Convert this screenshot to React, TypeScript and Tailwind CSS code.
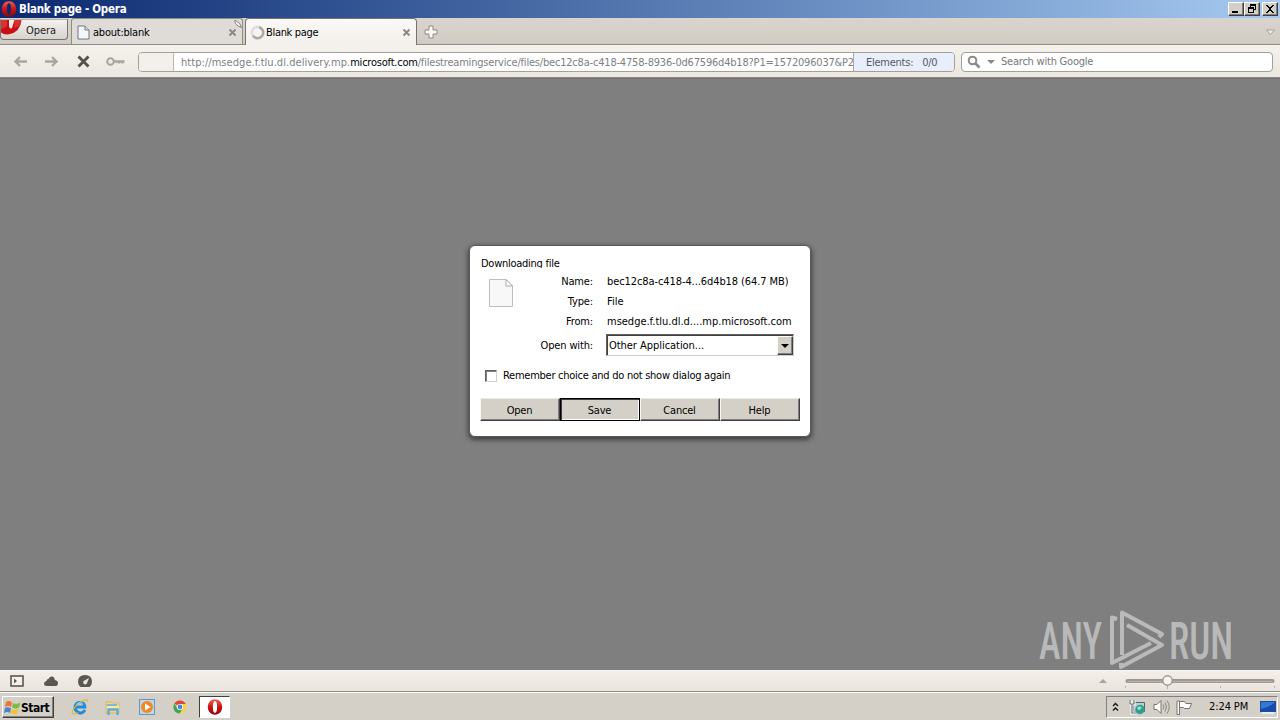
import type { ReactNode } from 'react';

const RAISED =
  'border border-t-white border-l-white border-r-[#404040] border-b-[#404040] shadow-[inset_-1px_-1px_0_#808080]';

function WinButton({ children, className = '' }: { children: ReactNode; className?: string }) {
  return (
    <button className={`flex h-[14px] w-4 items-center justify-center bg-[#d4d0c8] ${RAISED} ${className}`}>
      <svg width="12" height="12" viewBox="0 0 12 12" shapeRendering="crispEdges" className="shrink-0">{children}</svg>
    </button>
  );
}

function OperaO({ size }: { size: number }) {
  return (
    <svg width={size} height={size} viewBox="0 0 16 16" className="shrink-0">
      <defs>
        <linearGradient id="opera" x1="0" y1="0" x2="0" y2="1">
          <stop offset="0" stopColor="#f0604f" />
          <stop offset="0.5" stopColor="#cc1414" />
          <stop offset="1" stopColor="#8c0808" />
        </linearGradient>
      </defs>
      <path fillRule="evenodd" fill="url(#opera)" d="M8 .3C3.700.3.8 3.800.8 8s2.900 7.700 7.200 7.700 7.200-3.500 7.200-7.700S12.300.3 8 .3ZM8 2.200c1.600 0 2.100 2.700 2.100 5.800S9.600 13.800 8 13.800s-2.100-2.700-2.100-5.800S6.400 2.200 8 2.200Z" />
    </svg>
  );
}

function TabClose() {
  return (
    <svg width="9" height="9" viewBox="0 0 9 9" className="mt-[1px] shrink-0">
      <path d="M1.500 1.500l6 6M7.500 1.500l-6 6" stroke="#8b8782" strokeWidth="1.900" />
    </svg>
  );
}

function TitleBar() {
  return (
    <header className="flex h-[18px] items-center bg-linear-to-r from-[#0d2870] to-[#a6caf0] pr-[2px] pl-[1px]">
      <OperaO size={16} />
      <span className="mt-[2px] ml-[2px] text-[11.5px] font-bold tracking-[-0.25px] text-white">Blank page - Opera</span>
      <div className="ml-auto flex">
        <WinButton><path d="M2 8h6v2H2z" /></WinButton>
        <WinButton>
          <path d="M4 1h6v6H8V6h1V3H5v1H4zM2 4h6v6H2zM3 6v3h4V6z" fillRule="evenodd" />
        </WinButton>
        <WinButton className="ml-[2px]"><path d="M2 2h2v1h1v1h2V3h1V2h2v1H9v1H8v1H7v2h1v1h1v1h1v1H8V9H7V8H5v1H4v1H2V9h1V8h1V7h1V5H4V4H3V3H2z" /></WinButton>
      </div>
    </header>
  );
}

function TabBar() {
  return (
    <div className="flex h-[27px] border-b border-[#8f8a83] bg-linear-to-b from-[#d9d5ce] to-[#d1cbc3]">
      <button className="mt-[1px] flex h-[21px] w-[68px] shrink-0 overflow-hidden rounded-b-[4px] border border-t-[#b5b0aa] border-[#77736f] bg-linear-to-b from-[#f3f1ee] to-[#d7d3ce]">
        <svg width="21" height="17" viewBox="0 0 21 17" className="shrink-0">
          <path d="M0 0H8V6.500Q9 9.500 11 8L13.500 0H20.500Q19.500 12 8 14.300Q3 15 0 12.500Z" fill="#c80f14" />
          <path d="M0 0H6V6Q3 9 0 9ZM14 0H20L18 6L13 8Z" fill="#e34b43" opacity=".6" />
        </svg>
        <span className="mt-[4px] ml-[4px] text-[11px] leading-[14px] tracking-[-0.05px] text-[#222]">Opera</span>
      </button>
      <div className="relative ml-[3px] flex h-[26px] w-[172px] shrink-0 items-center rounded-t-[3px] border border-b-0 border-[#8f8b87] bg-[#dfdbd7] pt-[1px] pr-[5px] pl-[5px]">
        <svg width="13" height="15" viewBox="0 0 13 15" className="shrink-0">
          <path d="M1 1H8L12 5V14H1Z" fill="#f4f7fc" stroke="#6e7787" />
          <path d="M8 1V5H12" fill="#d9dfea" stroke="#6e7787" />
        </svg>
        <span className="mt-[2px] ml-[3px] flex-1 text-[11px] tracking-[-0.23px] whitespace-nowrap text-black">about:blank</span>
        <TabClose />
        <svg width="9" height="9" viewBox="0 0 9 9" className="absolute top-[1px] right-[-1px]">
          <path d="M1 0Q0 5 7.500 7.500Q7 3 1 0Z" fill="#f6f3ed" stroke="#77746f" strokeWidth=".9" />
        </svg>
      </div>
      <div className="z-10 ml-[2px] flex h-[27px] w-[172px] shrink-0 items-center rounded-t-[4px] border border-b-0 border-[#77736e] bg-linear-to-b from-[#faf9f6] to-[#f3f0ea] pr-[5px] pb-px pt-[1px] pl-[4px]">
        <svg width="15" height="15" viewBox="0 0 15 15" className="shrink-0">
          <circle cx="7.500" cy="7.500" r="5.600" fill="none" stroke="#dedddd" strokeWidth="2.500" />
          <path d="M9 2.200A5.600 5.600 0 1 1 3 10.800" fill="none" stroke="#aaa9ae" strokeWidth="2.500" />
        </svg>
        <span className="mt-[2px] ml-[1px] flex-1 text-[11px] tracking-[-0.32px] whitespace-nowrap text-black">Blank page</span>
        <TabClose />
      </div>
      <svg width="14" height="14" viewBox="0 0 14 14" className="mt-[7px] ml-[7px]">
        <path d="M5 1H9V5H13V9H9V13H5V9H1V5H5Z" fill="#f9f8f4" stroke="#8e8b84" />
      </svg>
      <svg width="11" height="7" viewBox="0 0 11 7" className="mt-[11px] mr-[4px] ml-auto">
        <path d="M1.500 1H9.500L5.500 5.500Z" fill="#efede8" stroke="#a5a19a" />
      </svg>
    </div>
  );
}

function Toolbar() {
  return (
    <div className="flex h-[33px] items-center border-b border-[#8a8681] bg-linear-to-b from-[#f5f2ed] to-[#ece7e0] pt-[1px] pr-[7px] pl-[13px]">
      <svg width="15" height="13" viewBox="0 0 15 13"><path d="M14 6.500H3M7 2L2.500 6.500L7 11" fill="none" stroke="#aaa69f" strokeWidth="2.400" /></svg>
      <svg width="15" height="13" viewBox="0 0 15 13" className="ml-[16px]"><path d="M1 6.500H12M8 2L12.500 6.500L8 11" fill="none" stroke="#aaa69f" strokeWidth="2.400" /></svg>
      <svg width="13" height="13" viewBox="0 0 13 13" className="ml-[18px]"><path d="M1.500 1.500L11.500 11.500M11.500 1.500L1.500 11.500" stroke="#55524d" strokeWidth="2.900" /></svg>
      <svg width="19" height="11" viewBox="0 0 19 11" className="ml-[16px]">
        <circle cx="4.500" cy="5.500" r="3.300" fill="none" stroke="#aaa69f" strokeWidth="2" />
        <path d="M8 5.500H18.500M13 5V7.500M16.500 5V7.500" stroke="#aaa69f" strokeWidth="2.400" />
      </svg>
      <div className="ml-[13px] flex h-[20px] w-[817px] shrink-0 overflow-hidden rounded-[4px] border border-[#a39f99] bg-white text-[11px] leading-[18px] text-[#808080]">
        <div className="w-[35px] shrink-0 border-r border-[#b9b5af] bg-[#f3f0eb]" />
        <div className="flex-1 overflow-hidden pt-px pl-[7px] tracking-[-0.196px] whitespace-nowrap">
          <span className="tracking-[0.05px]">http://msedge.f.tlu.dl.delivery.mp.</span>
          <span className="tracking-[-0.22px] text-black">microsoft.com</span>/filestreamingservice/files/bec12c8a-c418-4758-8936-0d67596d4b18?P1=1572096037&amp;P2
        </div>
        <div className="w-[101px] shrink-0 border-l border-[#a5a8b0] bg-[#e8effb] pt-px pl-[12px] tracking-[-0.25px] text-[#555b66]">
          Elements:<span className="ml-[9px]">0/0</span>
        </div>
      </div>
      <div className="ml-[6px] flex h-[20px] flex-1 items-center rounded-[4px] border border-[#a39f99] bg-white">
        <svg width="14" height="14" viewBox="0 0 14 14" className="ml-[5px]">
          <circle cx="5.500" cy="5.500" r="3.800" fill="none" stroke="#8c8a87" strokeWidth="2" />
          <path d="M8.500 8.500L12.500 12.500" stroke="#8c8a87" strokeWidth="2.600" />
        </svg>
        <svg width="8" height="4" viewBox="0 0 8 4" className="ml-[6px]"><path d="M0 0H8L4 4Z" fill="#8c8a87" /></svg>
        <span className="mt-px ml-[6px] text-[11px] tracking-[-0.22px] text-[#777]">Search with Google</span>
      </div>
    </div>
  );
}

function Row({ label, value, spacing }: { label: string; value: string; spacing: string }) {
  return (
    <div className="flex h-[20px] items-center">
      <span className="w-[73px] text-right tracking-[-0.15px]">{label}</span>
      <span className={`ml-[14px] whitespace-nowrap ${spacing}`}>{value}</span>
    </div>
  );
}

function DialogButton({ label, focused = false }: { label: string; focused?: boolean }) {
  const edge = focused
    ? 'border border-black shadow-[inset_1px_1px_0_#404040,inset_-1px_-1px_0_#fff]'
    : 'border border-t-[#eceae6] border-l-[#f8f7f5] border-r-[#404040] border-b-[#404040] shadow-[inset_-1px_-1px_0_#808080]';
  return (
    <button className={`flex h-[23px] w-[80px] items-center justify-center bg-[#d4d0c8] pt-px pr-px tracking-[-0.2px] ${edge}`}>{label}</button>
  );
}

function Dialog() {
  return (
    <section className="mt-[166px] h-[192px] w-[342px] rounded-[6px] border border-[#5a5a5a] bg-white pt-[11px] pl-[10px] text-[11px] leading-[13px] text-black shadow-[0_2px_5px_1px_rgba(0,0,0,0.5)]">
      <h1 className="h-[11px] overflow-hidden pl-[1px] tracking-[-0.26px]">Downloading file</h1>
      <div className="mt-[3px] flex h-[60px]">
        <svg width="24" height="28" viewBox="0 0 24 28" className="mt-[8px] ml-[9px]">
          <path d="M.5.5H17L23.500 7V27.500H.5Z" fill="#f8f8f8" stroke="#bdbdbd" />
          <path d="M17 .5V7H23.500Z" fill="#fff" stroke="#aaa" />
        </svg>
        <div className="ml-[7px]">
          <Row label="Name:" value="bec12c8a-c418-4...6d4b18 (64.7 MB)" spacing="tracking-[-0.09px]" />
          <Row label="Type:" value="File" spacing="tracking-[0.05px]" />
          <Row label="From:" value="msedge.f.tlu.dl.d....mp.microsoft.com" spacing="tracking-[-0.01px]" />
        </div>
      </div>
      <div className="mt-[3px] flex items-center">
        <span className="mt-px w-[113px] text-right tracking-[-0.15px]">Open with:</span>
        <div className="ml-[13px] flex h-[22px] w-[188px] items-center justify-between border border-t-[#606060] border-l-[#606060] border-r-[#d4d0c8] border-b-[#d4d0c8] pl-[2px] shadow-[inset_1px_1px_0_#404040]">
          <span className="mt-px tracking-[-0.04px]">Other Application...</span>
          <div className={`mt-px flex h-[19px] w-[16px] items-center justify-center bg-[#d4d0c8] pr-px ${RAISED}`}>
            <svg width="8" height="4" viewBox="0 0 8 4" className="shrink-0"><path d="M0 0H8L4 4Z" /></svg>
          </div>
        </div>
      </div>
      <div className="mt-[13px] flex items-center pl-[5px]">
        <span className="h-[12px] w-[12px] border border-t-[#606060] border-l-[#606060] border-r-[#d4d0c8] border-b-[#d4d0c8] bg-white shadow-[inset_1px_1px_0_#808080]" />
        <span className="ml-[6px] tracking-[-0.26px] whitespace-nowrap">Remember choice and do not show dialog again</span>
      </div>
      <div className="mt-[16px] flex">
        <DialogButton label="Open" />
        <DialogButton label="Save" focused />
        <DialogButton label="Cancel" />
        <DialogButton label="Help" />
      </div>
    </section>
  );
}

function Watermark() {
  return (
    <svg width="210" height="68" viewBox="0 0 210 68" className="absolute top-[607px] left-[1036px] z-20 overflow-visible">
      <g fill="#d5d5d5" opacity=".68" fontFamily="Roboto, sans-serif" fontSize="51" fontWeight="500">
        <text x="3" y="52" textLength="63" lengthAdjust="spacingAndGlyphs">ANY</text>
        <text x="133" y="52" textLength="64" lengthAdjust="spacingAndGlyphs">RUN</text>
      </g>
      <g fill="none" stroke="#cecece" strokeOpacity=".75" strokeWidth="4" strokeLinejoin="round">
        <path d="M81 12L76 10.500V56L115 36" />
        <path d="M86 48V5.500L126 27L123 30" />
        <path d="M91 18L126 38L85 60V56" />
      </g>
    </svg>
  );
}

function StatusBar() {
  return (
    <div className="flex h-[22px] items-center border-t border-[#f8f6f2] border-b border-b-[#908c86] bg-linear-to-b from-[#f4eeea] to-[#ebe4dd] pl-[10px]">
      <svg width="14" height="12" viewBox="0 0 14 12">
        <rect x="1" y="1" width="12" height="10" fill="#f5f2ee" stroke="#5b5854" strokeWidth="1.600" />
        <path d="M4 3.500V8.500L7 6Z" fill="#5b5854" />
      </svg>
      <svg width="14" height="11" viewBox="0 0 14 11" className="ml-[20px]">
        <path d="M3 10Q0 10 0 7.500Q0 5.500 2.500 5Q2.500 3 4.500 3Q5.500.2 8 .5Q10.500.8 10.800 4Q14 4.500 14 7.200Q14 10 11 10Z" fill="#5b5854" />
      </svg>
      <svg width="14" height="12" viewBox="0 0 14 12" className="ml-[20px]">
        <path d="M2.500 12Q0 9.500 0 7Q0 0 7 0T14 7Q14 9.500 11.500 12Z" fill="#5b5854" />
        <path d="M11 3L8.800 8.500A2 2 0 1 1 6 5.700Z" fill="#ece6df" />
      </svg>
      <svg width="184" height="16" viewBox="0 0 184 16" className="ml-auto">
        <path d="M3 10L7 6L11 10Z" fill="#aaa39b" />
        <path d="M31.500 8H176.500" stroke="#9c948d" strokeWidth="4" strokeLinecap="round" />
        <path d="M31.500 8.500H176.500" stroke="#b8b1ab" strokeWidth="1.500" />
        <path d="M29.500 13v2M71.500 13v3M124.500 13v2M178.500 13v2" stroke="#b7aea5" />
        <circle cx="71.500" cy="7.500" r="4.700" fill="#f7f4f1" stroke="#9d9690" strokeWidth="1.400" />
      </svg>
    </div>
  );
}

function Flag() {
  return (
    <svg width="17" height="17" viewBox="0 0 17 17" className="shrink-0">
      <path d="M2 3Q5 1 8 3.500L7 8Q4.500 6 1 8Z" fill="#ef7439" />
      <path d="M9 4Q12 6 16.500 3.500L15 8.500Q12 10.500 8 8.500Z" fill="#7eb94b" />
      <path d="M1 9Q4 7.500 7 9.500L6 14Q3.500 12 0 14Z" fill="#4286d0" />
      <path d="M8 10Q11 11.500 14.500 9.500L13 15Q10 16 6.500 14Z" fill="#f4c52c" />
    </svg>
  );
}

function LaunchIcons() {
  return (
    <div className="flex items-center">
      <svg width="18" height="18" viewBox="0 0 18 18" className="ml-[17px]">
        <path fill="none" stroke="#258ad5" strokeWidth="3" d="M14 12Q11.500 16 7.500 14.500Q3.500 12.500 4 8.500Q5 4.500 9 4.500Q13.500 4.500 13.800 9H5" />
        <path d="M16 4Q17.500 1 13.500 2Q8 4 4 9Q-.5 14.500 2 16Q4 16.500 7 14.500" fill="none" stroke="#e4b637" strokeWidth="1.200" />
        <path d="M5.500 6.500Q9 3.500 12 6.500" fill="none" stroke="#83cff7" strokeWidth="1.200" />
      </svg>
      <svg width="16" height="17" viewBox="0 0 16 17" className="ml-[16px]">
        <path d="M1 3H6L7 4H14V14H1Z" fill="#efd680" stroke="#cdb45e" strokeWidth=".7" />
        <path d="M2 5H12V7H2Z" fill="#80bad0" /><path d="M2 7H14V12H2Z" fill="#fae9a8" />
        <path d="M3.500 16V10.500H12.500V16" fill="none" stroke="#65a8d3" strokeWidth="2.400" />
      </svg>
      <svg width="16" height="16" viewBox="0 0 16 16" className="ml-[18px]">
        <rect x=".5" y=".5" width="15" height="15" fill="#b9d7ee" stroke="#6697c3" />
        <circle cx="8" cy="8" r="6" fill="#f08a20" /><path d="M6 4.500L11.500 8L6 11.500Z" fill="#fff" />
      </svg>
      <svg width="14" height="14" viewBox="0 0 14 14" className="ml-[18px]">
        <circle cx="7" cy="7" r="6.500" fill="#fbd33d" />
        <path d="M7 7L1.400 3.500A6.500 6.500 0 0 1 12.700 3.900L7 4Z" fill="#df463a" />
        <path d="M1.400 3.500A6.500 6.500 0 0 0 6.500 13.500L9.500 9L4.300 8.500Z" fill="#3ba55d" />
        <circle cx="7" cy="7" r="3.100" fill="#fff" /><circle cx="7" cy="7" r="2.400" fill="#4386e8" />
      </svg>
      <div className="ml-[12px] flex h-[22px] w-[31px] items-center justify-center border border-t-[#404040] border-l-[#404040] border-r-white border-b-white bg-white">
        <OperaO size={16} />
      </div>
    </div>
  );
}

function Taskbar() {
  return (
    <footer className="flex h-[28px] items-center border-t border-white bg-[#d4d0c8] pt-[1px] pr-[2px] pl-[2px]">
      <button className={`flex h-[22px] w-[52px] items-center bg-[#d4d0c8] pl-[1px] ${RAISED}`}>
        <Flag />
        <span className="mt-px text-[12px] font-bold tracking-[-0.5px] text-black">Start</span>
      </button>
      <LaunchIcons />
      <div className="ml-auto flex h-[22px] w-[172px] items-center border border-t-[#808080] border-l-[#808080] border-r-white border-b-white">
        <svg width="8" height="10" viewBox="0 0 8 10" className="ml-[5px]">
          <path d="M1 4L3.500 1.500L6 4M1 8.500L3.500 6L6 8.500" fill="none" stroke="#111" strokeWidth="1.300" />
        </svg>
        <svg width="17" height="17" viewBox="0 0 17 17" className="ml-[9px]">
          <path d="M4.500 3.500H15.500V12.500H4.500Z" fill="#b9d3d5" stroke="#52636b" />
          <path d="M1 1V5H5V1M3 5V14H8" fill="none" stroke="#fff" strokeWidth="3" />
          <path d="M1 1V5H5V1M3 5V14H8" fill="none" stroke="#68716c" strokeWidth="1.200" />
          <circle cx="11" cy="10.500" r="4.700" fill="#319d93" /><path d="M8 9Q10 6.500 13 8.500L10 11.500Z" fill="#a5e0c3" />
        </svg>
        <svg width="18" height="16" viewBox="0 0 18 16" className="ml-[7px]">
          <path d="M1 5.500H4L8 1.500V14.500L4 10.500H1Z" fill="#fff" stroke="#77736f" />
          <path d="M10 5.500Q12 8 10 10.500M12 3.500Q15 8 12 12.500M14 1.500Q18.500 8 14 14.500" fill="none" stroke="#8b8782" />
        </svg>
        <svg width="17" height="15" viewBox="0 0 17 15" className="ml-[5px]">
          <path d="M2.500 1.500H8.500L10 3.500H15.500L13.500 8.500H8.500L7.500 7.500H3.500" fill="#fff" stroke="#77736f" />
          <path d="M1 1H3.500V14.500H1Z" fill="#fff" stroke="#77736f" />
        </svg>
        <span className="mt-px ml-[16px] text-[11px] tracking-[-0.1px] whitespace-nowrap text-black">2:24 PM</span>
        <svg width="16" height="15" viewBox="0 0 16 15" className="mr-px ml-auto">
          <rect x=".5" y="1.500" width="15" height="10" fill="#3478d5" stroke="#244b8e" />
          <path d="M1 9Q9 8 15 2V11H1Z" fill="#164aab" /><path d="M2 13H14" stroke="#e4edf8" strokeWidth="2" />
        </svg>
      </div>
    </footer>
  );
}

export default function App() {
  return (
    <div className="relative flex h-[720px] w-[1280px] flex-col overflow-hidden bg-[#d4d0c8] font-['DejaVu_Sans_Condensed','DejaVu_Sans',sans-serif] [font-stretch:condensed]">
      <TitleBar />
      <TabBar />
      <Toolbar />
      <main className="flex flex-1 items-start justify-center border-t border-[#747474] bg-[#7f7f7f]">
        <Dialog />
      </main>
      <StatusBar />
      <Taskbar />
      <Watermark />
    </div>
  );
}
